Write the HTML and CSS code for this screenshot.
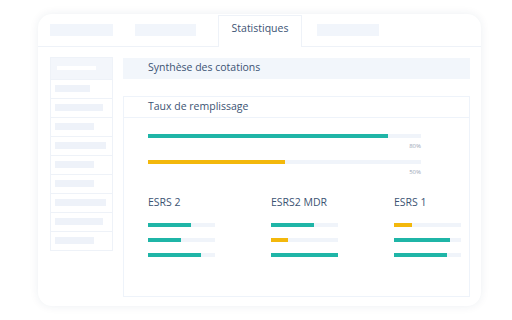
FILE: index.html
```html
<!DOCTYPE html>
<html lang="fr">
<head>
  <meta charset="UTF-8">
  <meta name="viewport" content="width=device-width, initial-scale=1.0">
  <title>Statistiques</title>
  <link rel="stylesheet" href="styles.css">
</head>
<body>
<div class="card">
  <div class="tabs">
    <span class="tab-ph ph-1"></span>
    <span class="tab-ph ph-2"></span>
    <div class="tab active">Statistiques</div>
    <span class="tab-ph ph-3"></span>
  </div>

  <div class="content">
    <aside class="sidebar">
      <div class="side-head"><span></span></div>
      <div class="side-row"><span style="width:35px"></span></div>
      <div class="side-row"><span style="width:48px"></span></div>
      <div class="side-row"><span style="width:39px"></span></div>
      <div class="side-row"><span style="width:51px"></span></div>
      <div class="side-row"><span style="width:39px"></span></div>
      <div class="side-row"><span style="width:39px"></span></div>
      <div class="side-row"><span style="width:51px"></span></div>
      <div class="side-row"><span style="width:48px"></span></div>
      <div class="side-row"><span style="width:39px"></span></div>
    </aside>

    <main class="main">
      <div class="synth">Synthèse des cotations</div>

      <div class="panel">
        <div class="panel-head">Taux de remplissage</div>
        <div class="panel-body">
          <div class="big-bar">
            <div class="track"><div class="fill teal" style="width:88%"></div></div>
            <div class="pct">80%</div>
          </div>
          <div class="big-bar">
            <div class="track"><div class="fill yellow" style="width:50%"></div></div>
            <div class="pct">50%</div>
          </div>

          <div class="groups">
            <div class="group">
              <h4>ESRS 2</h4>
              <div class="track small"><div class="fill teal" style="width:64%"></div></div>
              <div class="track small"><div class="fill teal" style="width:49%"></div></div>
              <div class="track small"><div class="fill teal" style="width:79%"></div></div>
            </div>
            <div class="group">
              <h4>ESRS2 MDR</h4>
              <div class="track small"><div class="fill teal" style="width:64%"></div></div>
              <div class="track small"><div class="fill yellow" style="width:25%"></div></div>
              <div class="track small"><div class="fill teal" style="width:100%"></div></div>
            </div>
            <div class="group last">
              <h4>ESRS 1</h4>
              <div class="track small"><div class="fill yellow" style="width:27%"></div></div>
              <div class="track small"><div class="fill teal" style="width:84%"></div></div>
              <div class="track small"><div class="fill teal" style="width:79%"></div></div>
            </div>
          </div>
        </div>
      </div>
    </main>
  </div>
</div>
</body>
</html>
```

FILE: styles.css
```css
/* Reset */
* {
  margin: 0;
  padding: 0;
  box-sizing: border-box;
}

body {
  font-family: 'Open Sans', 'Noto Sans', sans-serif;
  color: #3c5373;
  background: #fff;
  width: 512px;
  height: 320px;
  overflow: hidden;
}

.card {
  margin: 14px 0 0 38px;
  width: 443px;
  height: 292px;
  background: #fff;
  border-radius: 14px;
  box-shadow: 0 0 10px rgba(30, 50, 90, 0.08);
  overflow: hidden;
}

/* Tabs */
.tabs {
  display: flex;
  align-items: flex-end;
  height: 33px;
  padding-left: 12px;
  border-bottom: 1px solid #eef2f8;
}

.tab-ph {
  align-self: flex-start;
  margin-top: 10px;
  height: 12px;
  background: #f1f5fb;
}

.ph-1 { width: 63px; }
.ph-2 { width: 61px; margin-left: 22px; }
.ph-3 { width: 62px; margin-left: 15px; }

.tab {
  margin-left: 22px;
  width: 84px;
  height: 32px;
  margin-bottom: -1px;
  border: 1px solid #eef2f8;
  border-bottom: none;
  background: #fff;
  font-size: 10.5px;
  line-height: 24px;
  text-align: center;
  color: #3c5373;
}

/* Layout */
.content {
  display: flex;
  align-items: flex-start;
  gap: 10px;
  padding: 10px 11px 0 12px;
}

.sidebar {
  width: 63px;
  flex: none;
  border: 1px solid #eef2f8;
}

.side-head {
  height: 21px;
  background: #f3f6fb;
  padding: 8px 0 0 6px;
}

.side-head span {
  display: block;
  width: 39px;
  height: 4px;
  background: #fff;
}

.side-row {
  height: 19px;
  border-top: 1px solid #eef2f8;
  padding: 5px 0 0 4px;
}

.side-row span {
  display: block;
  height: 7px;
  background: #eef2f9;
}

.main {
  flex: 1;
  min-width: 0;
}

.synth {
  height: 21px;
  margin-top: 1px;
  background: #f2f6fb;
  padding-left: 25px;
  font-size: 10.5px;
  line-height: 19px;
}

.panel {
  margin-top: 17px;
  height: 201px;
  border: 1px solid #eef3fa;
}

.panel-head {
  height: 21px;
  border-bottom: 1px solid #eef3fa;
  padding-left: 24px;
  font-size: 10.5px;
  line-height: 19px;
}

.panel-body {
  padding: 16px 0 0 24px;
}

/* Bars */
.track {
  height: 4px;
  background: #f0f4fa;
}

.fill {
  height: 100%;
}

.teal { background: #1fb5a7; }
.yellow { background: #f3b80c; }

.big-bar {
  width: 273px;
  height: 26px;
}

.pct {
  text-align: right;
  font-size: 6px;
  line-height: 8px;
  margin-top: 4px;
  color: #9aa6b6;
}

.groups {
  display: flex;
  margin-top: 9px;
}

.group {
  width: 123px;
  flex: none;
}

.group.last {
  width: auto;
  flex: 1;
}

.group h4 {
  font-weight: normal;
  font-size: 10.5px;
  line-height: 14px;
  height: 28px;
}

.track.small {
  width: 67px;
  margin-bottom: 11px;
}
```
